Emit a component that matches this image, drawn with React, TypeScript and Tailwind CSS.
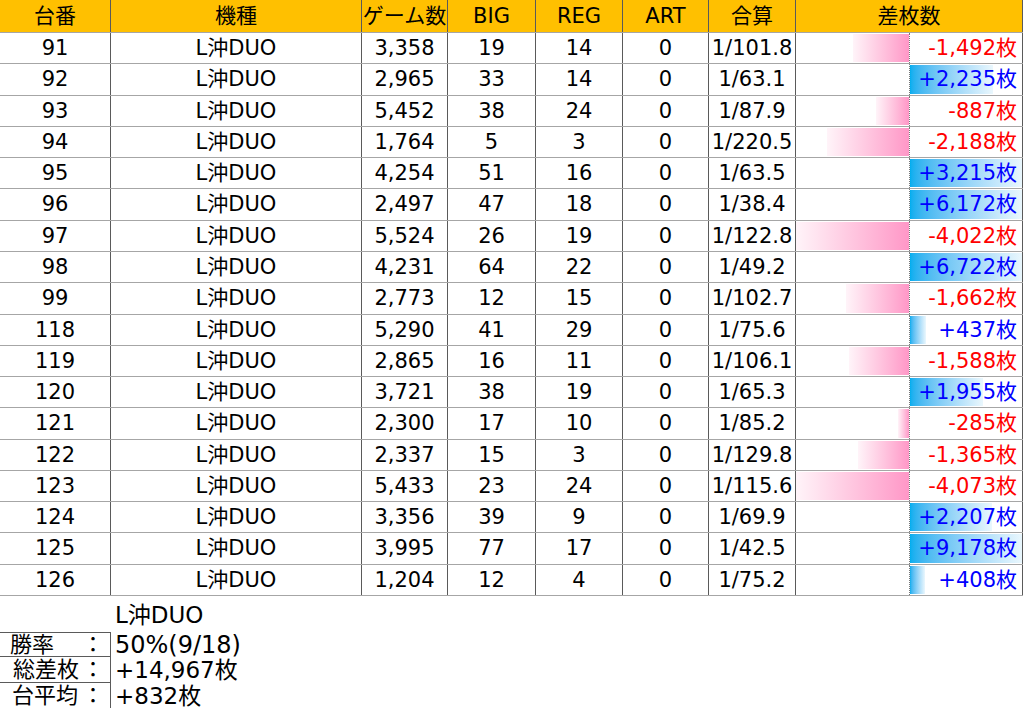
import React from 'react';

type Row = {
  no: number;
  games: string;
  big: number;
  reg: number;
  art: number;
  rate: string;
  diff: number;
};

const ROWS: Row[] = [
  { no: 91, games: '3,358', big: 19, reg: 14, art: 0, rate: '1/101.8', diff: -1492 },
  { no: 92, games: '2,965', big: 33, reg: 14, art: 0, rate: '1/63.1', diff: 2235 },
  { no: 93, games: '5,452', big: 38, reg: 24, art: 0, rate: '1/87.9', diff: -887 },
  { no: 94, games: '1,764', big: 5, reg: 3, art: 0, rate: '1/220.5', diff: -2188 },
  { no: 95, games: '4,254', big: 51, reg: 16, art: 0, rate: '1/63.5', diff: 3215 },
  { no: 96, games: '2,497', big: 47, reg: 18, art: 0, rate: '1/38.4', diff: 6172 },
  { no: 97, games: '5,524', big: 26, reg: 19, art: 0, rate: '1/122.8', diff: -4022 },
  { no: 98, games: '4,231', big: 64, reg: 22, art: 0, rate: '1/49.2', diff: 6722 },
  { no: 99, games: '2,773', big: 12, reg: 15, art: 0, rate: '1/102.7', diff: -1662 },
  { no: 118, games: '5,290', big: 41, reg: 29, art: 0, rate: '1/75.6', diff: 437 },
  { no: 119, games: '2,865', big: 16, reg: 11, art: 0, rate: '1/106.1', diff: -1588 },
  { no: 120, games: '3,721', big: 38, reg: 19, art: 0, rate: '1/65.3', diff: 1955 },
  { no: 121, games: '2,300', big: 17, reg: 10, art: 0, rate: '1/85.2', diff: -285 },
  { no: 122, games: '2,337', big: 15, reg: 3, art: 0, rate: '1/129.8', diff: -1365 },
  { no: 123, games: '5,433', big: 23, reg: 24, art: 0, rate: '1/115.6', diff: -4073 },
  { no: 124, games: '3,356', big: 39, reg: 9, art: 0, rate: '1/69.9', diff: 2207 },
  { no: 125, games: '3,995', big: 77, reg: 17, art: 0, rate: '1/42.5', diff: 9178 },
  { no: 126, games: '1,204', big: 12, reg: 4, art: 0, rate: '1/75.2', diff: 408 },
];

const HEADERS = ['台番', '機種', 'ゲーム数', 'BIG', 'REG', 'ART', '合算', '差枚数'];

// bars saturate at about 3000 either way
const BAR_MAX = 3000;

const gridCols = 'grid grid-cols-[111px_251px_86px_88px_87px_86px_87px_227px] w-[1023px]';
const cell = 'flex items-center justify-center border-r border-[#5a5a5a]';

function fmtDiff(v: number) {
  const s = Math.abs(v).toLocaleString('en-US');
  return (v < 0 ? '-' : '+') + s + '枚';
}

function DiffCell({ v }: { v: number }) {
  const pct = Math.min(Math.abs(v) / BAR_MAX, 1) * 100;
  return (
    <div className="flex border-r border-[#5a5a5a]">
      <div className="relative w-[113px]">
        {v < 0 && (
          <div
            className="absolute right-0 top-[1px] bottom-[1px] bg-linear-to-l from-[#ff97c7] to-[#fff4f9]"
            style={{ width: `${pct}%` }}
          />
        )}
      </div>
      <div className="relative flex-1 border-l border-dotted border-[#777]">
        {v > 0 && (
          <div
            className="absolute left-0 top-[1px] bottom-[1px] bg-linear-to-r from-[#00aeef] to-[#eaf7fd]"
            style={{ width: `${pct}%` }}
          />
        )}
        <div
          className={`relative flex h-full items-center justify-end pr-[5px] whitespace-nowrap ${
            v < 0 ? 'text-[#ff0000]' : 'text-[#0000ff]'
          }`}
        >
          {fmtDiff(v)}
        </div>
      </div>
    </div>
  );
}

function SumLabel({ text, pad, h, top }: { text: string; pad: string; h: string; top?: boolean }) {
  return (
    <div
      className={`${h} ${pad} ${top ? 'border-t' : ''} flex items-center justify-between pr-[6px] border-b border-r border-[#5a5a5a] text-[22px] whitespace-nowrap`}
    >
      <span>{text}</span>
      <span>：</span>
    </div>
  );
}

export default function App() {
  // row bottoms follow ~31.28px spacing under a 33px header
  let prev = 32;
  const heights = ROWS.map((_, i) => {
    const b = Math.round(32 + (i + 1) * 31.28);
    const h = b - prev;
    prev = b;
    return h;
  });

  return (
    <div className="w-[1024px] h-[708px] overflow-hidden bg-white text-black font-[family-name:DejaVu_Sans,Noto_Sans_CJK_JP,sans-serif] text-[21px] leading-none">
      {/* header */}
      <div className={`${gridCols} h-[33px] bg-[#ffc000] border-b border-[#a6a6a6]`}>
        {HEADERS.map((h) => (
          <div key={h} className={cell}>
            {h}
          </div>
        ))}
      </div>

      {/* body */}
      {ROWS.map((r, i) => (
        <div
          key={r.no}
          className={`${gridCols} ${heights[i] === 32 ? 'h-[32px]' : 'h-[31px]'} border-b border-[#a6a6a6]`}
        >
          <div className={cell}>{r.no}</div>
          <div className={cell}>L沖DUO</div>
          <div className={cell}>{r.games}</div>
          <div className={cell}>{r.big}</div>
          <div className={cell}>{r.reg}</div>
          <div className={cell}>{r.art}</div>
          <div className={cell}>{r.rate}</div>
          <DiffCell v={r.diff} />
        </div>
      ))}

      {/* summary */}
      <div className="text-[23px]">
        <div className="h-[36px] flex items-center pl-[115px] pt-[2px]">L沖DUO</div>
        <div className="grid grid-cols-[111px_1fr]">
          <SumLabel text="勝率" pad="pl-[10px]" h="h-[25px]" top />
          <div className="h-[25px] flex items-center pl-[4px] whitespace-nowrap text-[24px]">50%(9/18)</div>
          <SumLabel text="総差枚" pad="pl-[13px]" h="h-[26px]" />
          <div className="h-[26px] flex items-center pl-[4px] whitespace-nowrap">+14,967枚</div>
          <SumLabel text="台平均" pad="pl-[12px]" h="h-[26px]" />
          <div className="h-[26px] flex items-center pl-[4px] whitespace-nowrap">+832枚</div>
        </div>
      </div>
    </div>
  );
}
